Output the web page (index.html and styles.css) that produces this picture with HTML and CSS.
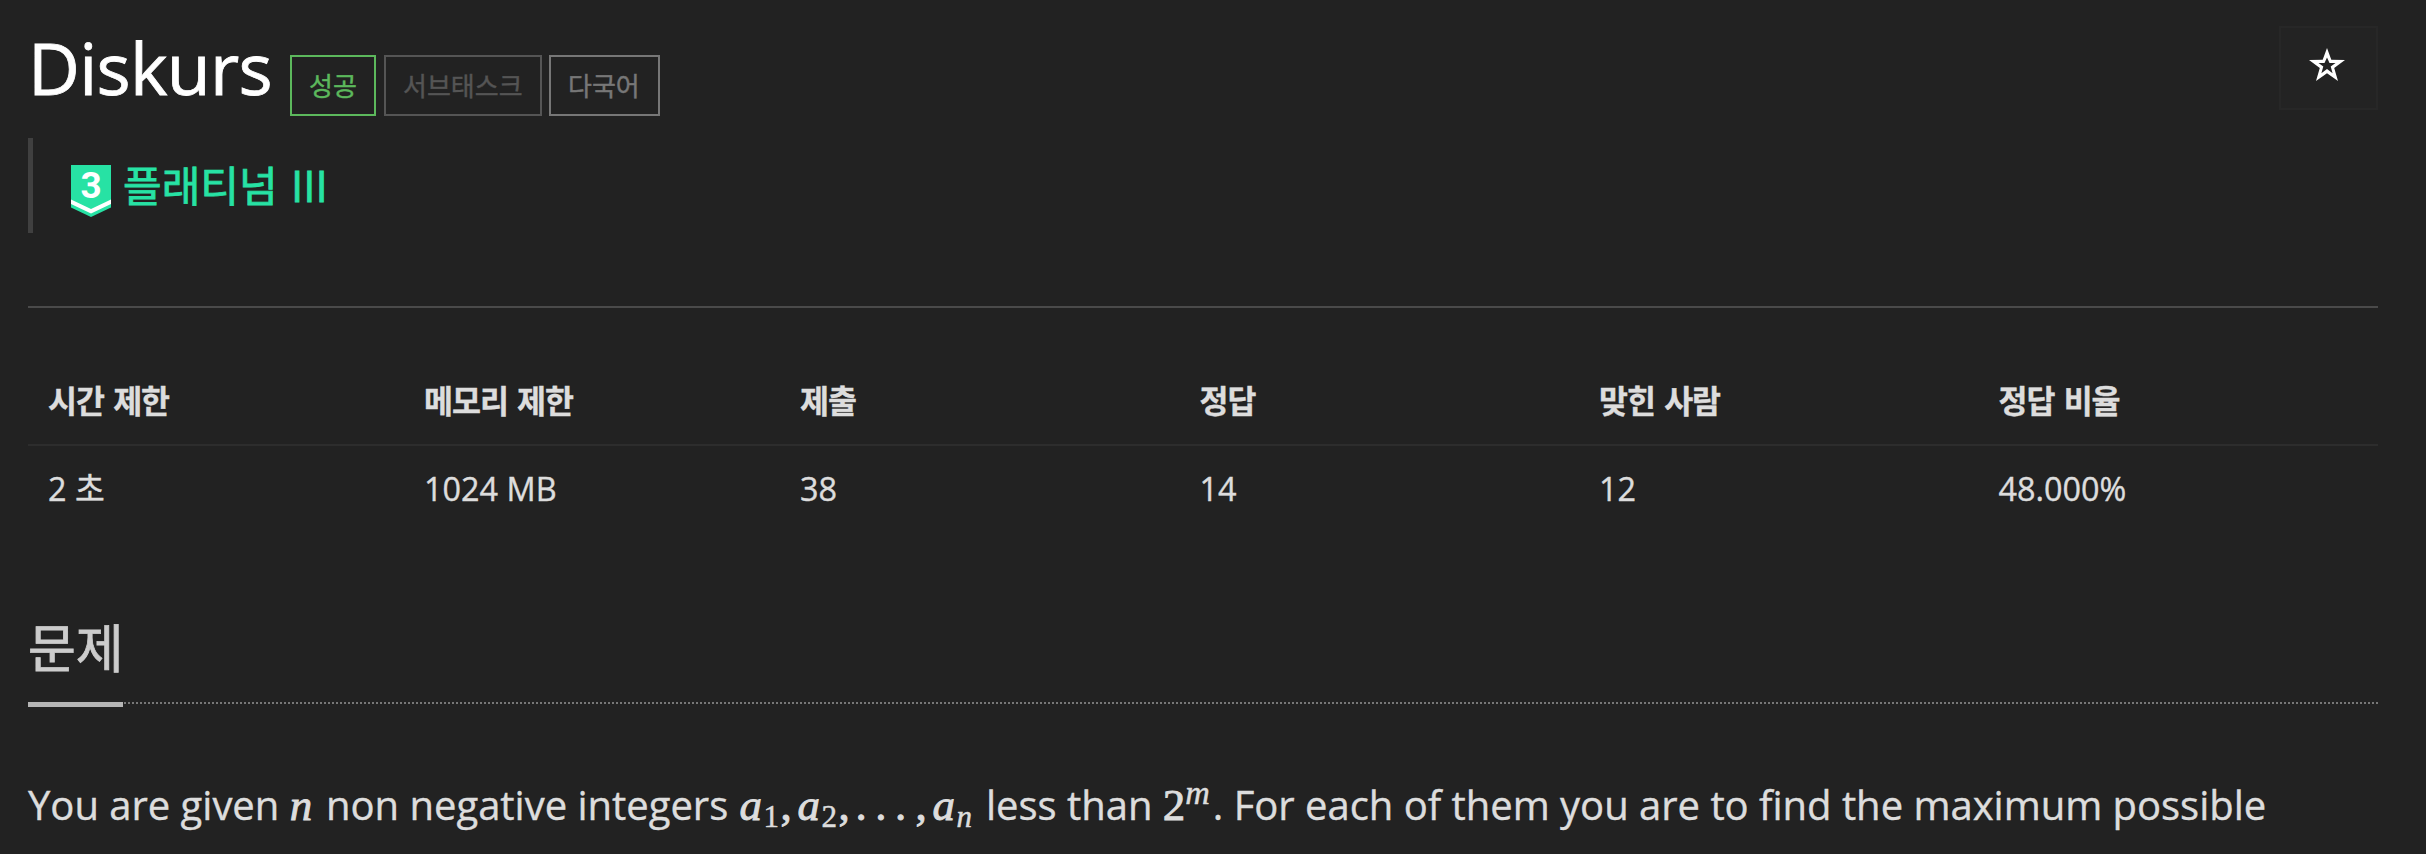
FILE: index.html
```html
<!DOCTYPE html>
<html lang="ko">
<head>
<meta charset="utf-8">
<title>Diskurs</title>
<link rel="stylesheet" href="styles.css">
</head>
<body>
<main class="page">
  <header class="top">
    <h1 class="title">Diskurs</h1>
    <div class="labels">
      <span class="label label-success">성공</span>
      <span class="label label-subtask">서브태스크</span>
      <span class="label label-lang">다국어</span>
    </div>
    <button class="favorite" aria-label="즐겨찾기">
      <svg width="36" height="34" viewBox="0 0 36 34"><path fill="#fff" fill-rule="evenodd" d="M18 0 22.3 11.7 36 12 25.2 20 29 33 18 25.2 7 33 10.8 20 0 12 13.7 11.7ZM18 9.5 15.5 15H9.5L14.3 18.6 12.4 25.2 18 21 23.6 25.2 21.7 18.6 26.5 15H20.5Z"/></svg>
    </button>
  </header>
  <blockquote class="tier">
    <svg class="badge" width="40" height="52" viewBox="0 0 40 52">
      <path fill="#27e2a4" d="M0 0H40V42.5L20 52 0 42.5Z"/>
      <path fill="#fff" d="M0 34.5 20 44 40 34.5V39L20 48.5 0 39Z"/>
      <text class="badge-number" x="20" y="33" text-anchor="middle">3</text>
    </svg>
    <span class="tier-name">플래티넘</span><span class="tier-level">III</span>
  </blockquote>
  <hr class="rule">
  <table class="info">
    <thead><tr><th class="narrow">시간 제한</th><th class="narrow">메모리 제한</th><th>제출</th><th>정답</th><th>맞힌 사람</th><th>정답 비율</th></tr></thead>
    <tbody><tr><td>2 초</td><td>1024 MB</td><td>38</td><td>14</td><td>12</td><td>48.000%</td></tr></tbody>
  </table>
  <div class="headline"><h2 class="section">문제</h2></div>
  <p class="statement">You are given <span class="math m-n"><i>n</i></span> non negative integers <span class="math m-list"><i class="m-a">a</i><sub class="m-sub">1</sub><span class="m-comma">,</span><i class="m-a">a</i><sub class="m-sub">2</sub><span class="m-comma">,</span><span class="m-dots">...</span><span class="m-comma">,</span><i class="m-a">a</i><sub class="m-sub"><i>n</i></sub></span> less than <span class="math m-pow">2<sup class="m-sup"><i>m</i></sup></span>. For each of them you are to find the maximum possible</p>
</main>
</body>
</html>
```
FILE: styles.css
```css
* { box-sizing: border-box; }
body {
  margin: 0;
  background: #222;
  color: #ddd;
  font-family: "Open Sans", "Noto Sans CJK KR", sans-serif;
  -webkit-text-stroke: 0.4px;
}
.page { padding: 25px 48px 0 28px; }
.top { display: flex; align-items: flex-start; height: 113px; }
.title { margin: -2px 0 0; width: 262px; font-size: 71.5px; line-height: 90px; font-weight: 400; color: #fff; letter-spacing: -0.7px; white-space: nowrap; -webkit-text-stroke: 0.8px; }
.labels { display: flex; gap: 7px; padding-top: 30px; }
.label { height: 61px; border: 2px solid; padding: 0 17px; font-size: 26px; line-height: 58px; white-space: nowrap; }
.label-success { width: 86px; color: #5cb85c; }
.label-subtask { width: 158px; color: #555; margin-left: 1px; }
.label-lang { width: 111px; color: #777; }
.favorite { margin-left: auto; margin-top: 1px; width: 99px; height: 84px; display: flex; justify-content: center; padding: 20px 3px 0 0; background: #232323; border: 2px solid #272727; }
.tier { margin: 0; height: 95px; border-left: 5px solid #404040; padding: 0 0 0 38px; display: flex; align-items: flex-start; color: #27e2a4; font-size: 42px; line-height: 96px; -webkit-text-stroke: 0.8px; }
.badge { margin-top: 27px; }
.badge-number { font: 700 37px Roboto, sans-serif; fill: #fff; -webkit-text-stroke: 0.8px #fff; }
.tier-name { margin-left: 12px; width: 168px; }
.tier-level { font-size: 44px; line-height: 94px; }
.rule { margin: 73px 0 60px; height: 2px; border: 0; background: #4a4a4a; }
.info { width: 100%; table-layout: fixed; border-collapse: collapse; font-size: 32.4px; line-height: 46px; }
.info th, .info td { padding: 0 20px; text-align: left; }
.info th { height: 77px; padding-bottom: 10px; border-bottom: 2px solid #2d2d2d; width: 17%; font-size: 31.5px; letter-spacing: -1px; word-spacing: 2px; }
.info .narrow { width: 16%; }
.info td { height: 86px; padding-bottom: 2px; }
.headline { margin-top: 77px; height: 96px; border-bottom: 2px dotted #777; }
.section { margin: 0; width: 95px; height: 99px; font-size: 52px; line-height: 80px; font-weight: 400; color: #ccc; border-bottom: 5px solid #b5b5b5; white-space: nowrap; -webkit-text-stroke: 0.8px; }
.statement { margin: 73px 0 0; font-size: 40px; line-height: 56px; white-space: nowrap; letter-spacing: -0.02px; }
.math { display: inline-flex; align-items: baseline; font-family: "Liberation Serif", serif; font-size: 45px; line-height: 40px; letter-spacing: 0; -webkit-text-stroke: 0.9px; }
.m-n { width: 26px; }
.m-list { width: 237px; padding-left: 1px; }
.m-a { width: 24px; }
.m-sub { width: 17px; font-size: 31px; line-height: 1; position: relative; top: 7px; -webkit-text-stroke: 0.5px; }
.m-comma { width: 17px; }
.m-dots { width: 60px; letter-spacing: 8.5px; }
.m-pow { width: 50px; }
.m-sup { font-size: 34px; line-height: 1; position: relative; top: -16px; -webkit-text-stroke: 0.5px; }
```
